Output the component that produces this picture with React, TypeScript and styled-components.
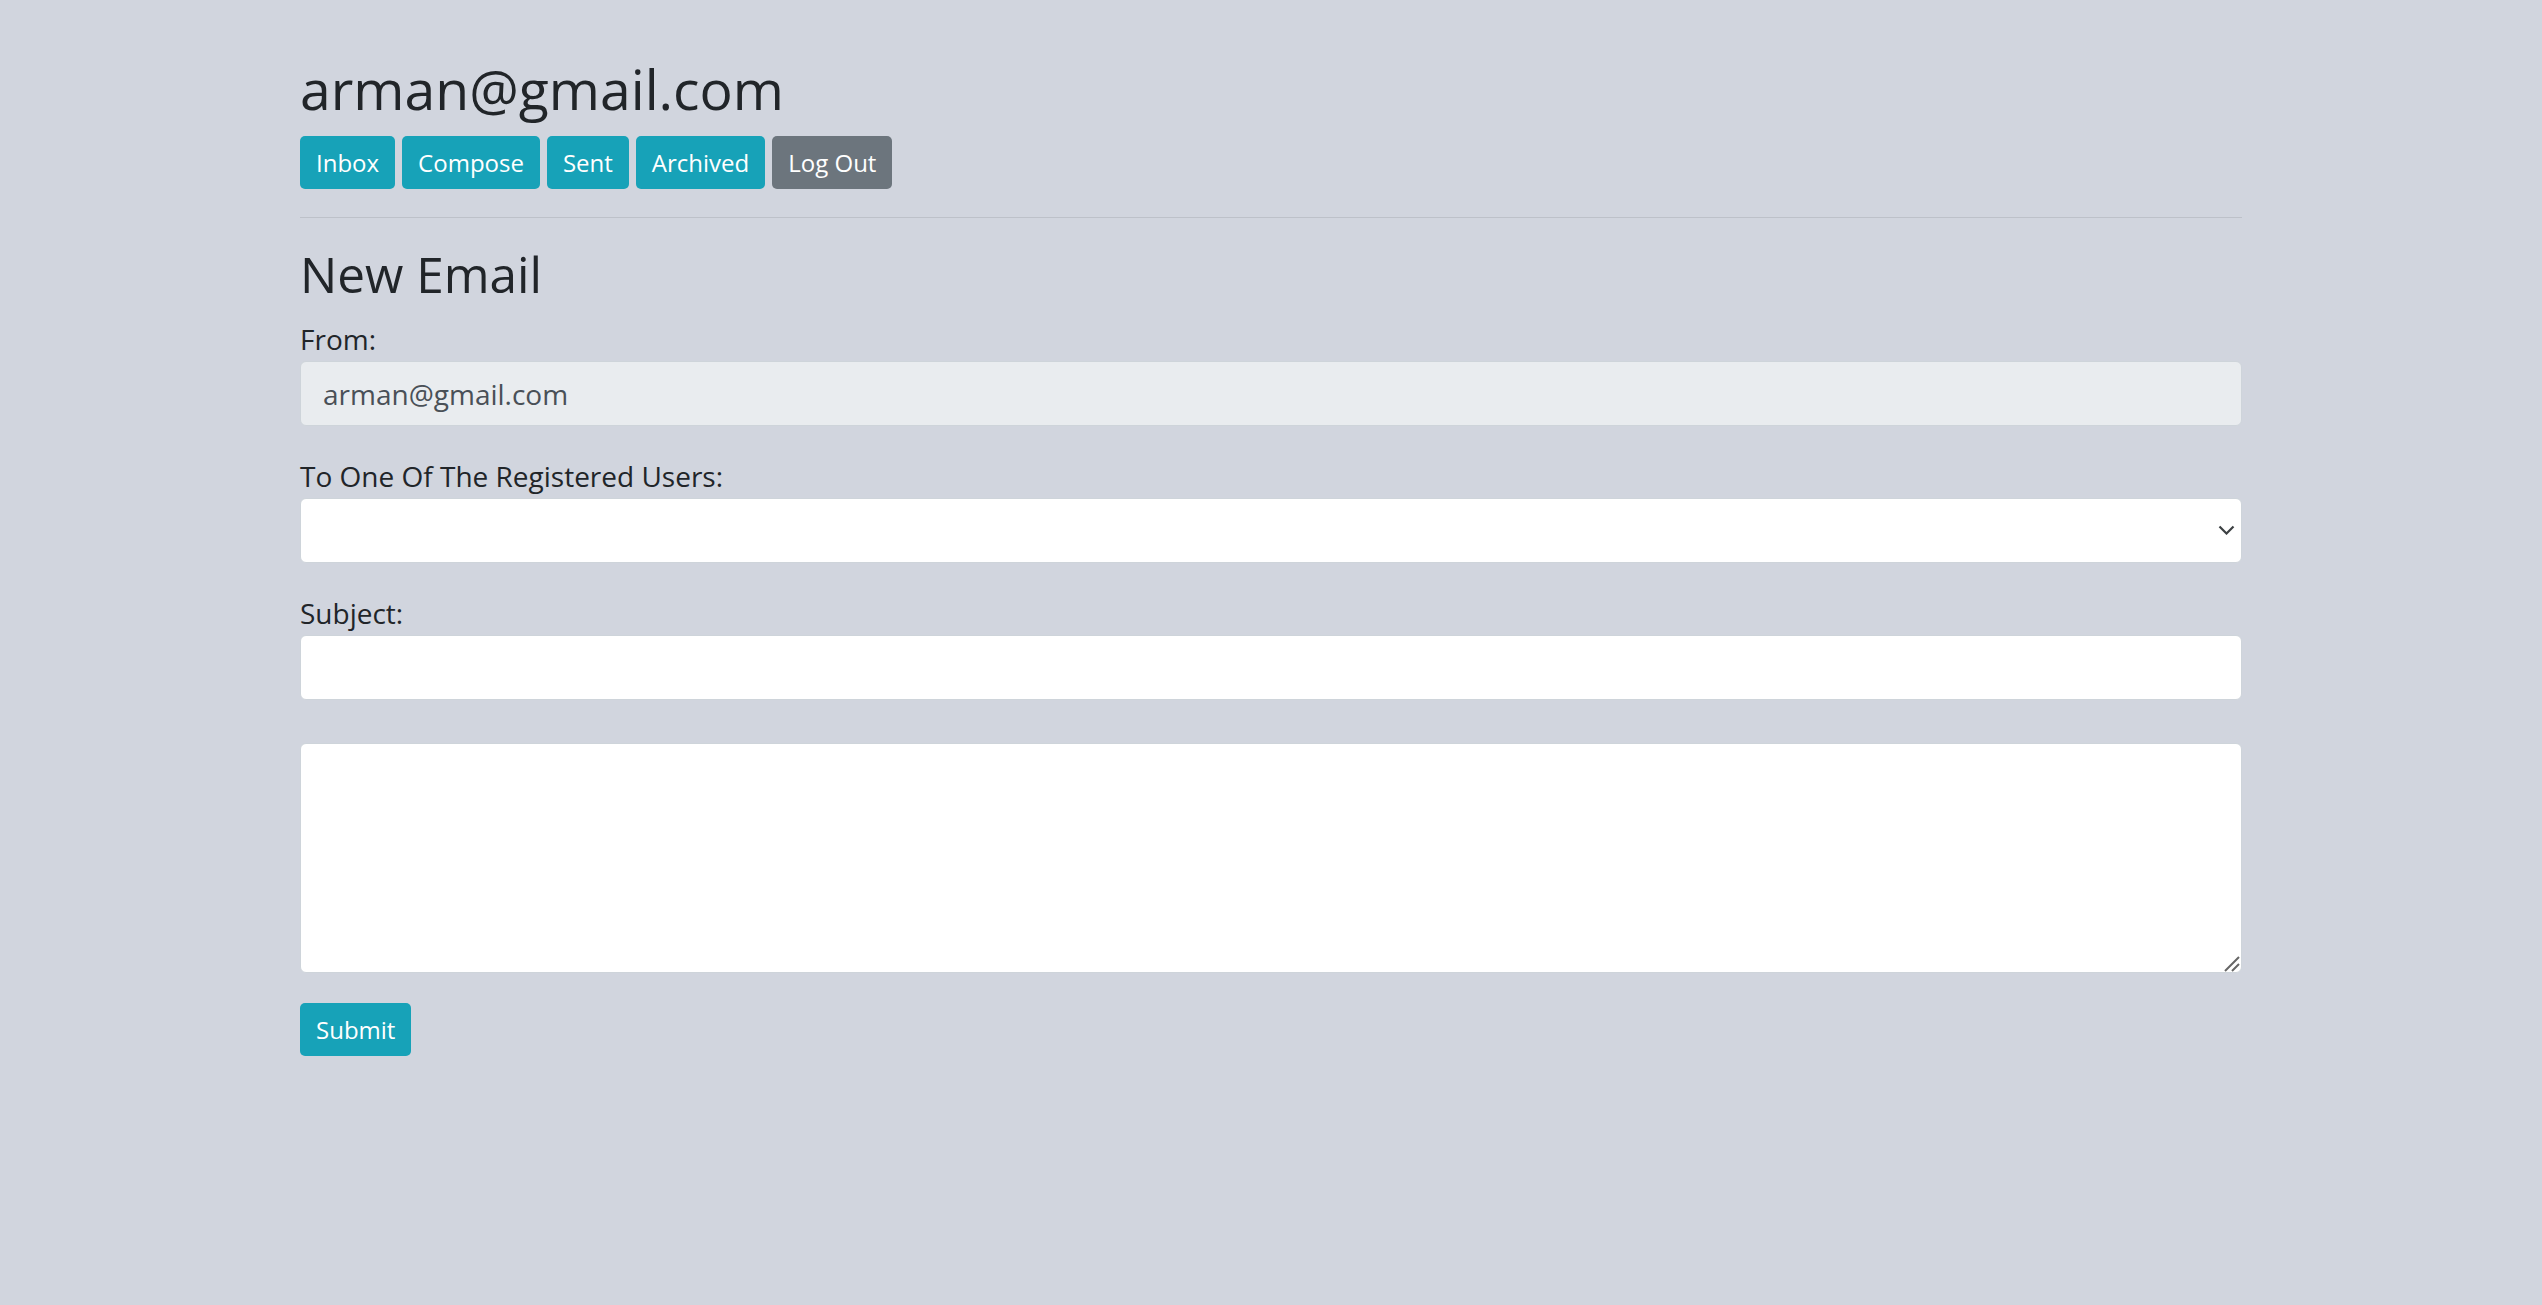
import React from "react";
import styled, { createGlobalStyle } from "styled-components";

const GlobalStyle = createGlobalStyle`
  html, body {
    margin: 0;
    padding: 0;
    background: #d1d5de;
  }
  body {
    font-family: "Open Sans", "Noto Sans", sans-serif;
    color: #212529;
  }
`;

function App() {
  return (
    <>
      <GlobalStyle />
      <Page>
        <Title>arman@gmail.com</Title>
        <Nav>
          <NavButton>Inbox</NavButton>
          <NavButton>Compose</NavButton>
          <NavButton>Sent</NavButton>
          <NavButton>Archived</NavButton>
          <NavButton $secondary>Log Out</NavButton>
        </Nav>
        <Rule />
        <Heading>New Email</Heading>
        <form onSubmit={(e) => e.preventDefault()}>
          <Group>
            <Label>From:</Label>
            <Input disabled value="arman@gmail.com" readOnly />
          </Group>
          <Group>
            <Label>To One Of The Registered Users:</Label>
            <SelectWrap>
              <Select defaultValue="">
                <option value=""></option>
              </Select>
              <Chevron width="17" height="10" viewBox="0 0 17 10">
                <path d="M1.5 1.5 L8.5 8.5 L15.5 1.5" fill="none" stroke="#3c4043" strokeWidth="2.2" />
              </Chevron>
            </SelectWrap>
          </Group>
          <Group>
            <Label>Subject:</Label>
            <Input />
          </Group>
          <Group $spaced>
            <TextWrap>
              <TextArea />
              <Grip width="16" height="16" viewBox="0 0 16 16">
                <path d="M1 15 L15 1 M8 15 L15 8" stroke="#666" strokeWidth="2" />
              </Grip>
            </TextWrap>
          </Group>
          <SubmitButton type="submit">Submit</SubmitButton>
        </form>
      </Page>
    </>
  );
}

const Page = styled.div`
  max-width: 1942px;
  margin: 0 auto;
  padding-top: 56px;
`;

const Title = styled.h1`
  margin: 0 0 14px;
  font-size: 55.3px;
  line-height: 66px;
  font-weight: 400;
`;

const Nav = styled.div`
  display: flex;
  gap: 7px;
`;

const NavButton = styled.button<{ $secondary?: boolean }>`
  height: 53px;
  padding: 0 16px;
  border: none;
  border-radius: 5px;
  background: ${(p) => (p.$secondary ? "#6c757d" : "#17a2b8")};
  color: #fff;
  font-family: inherit;
  font-size: 24px;
  cursor: pointer;
`;

const Rule = styled.hr`
  margin: 28px 0 0;
  border: none;
  border-top: 1px solid #bdc1c9;
`;

const Heading = styled.h3`
  margin: 26px 0 14px;
  font-size: 49.5px;
  line-height: 60px;
  font-weight: 400;
`;

const Group = styled.div<{ $spaced?: boolean }>`
  margin-bottom: 29px;
  margin-top: ${(p) => (p.$spaced ? "43px" : "0")};
`;

const Label = styled.div`
  font-size: 28px;
  line-height: 42px;
  margin-bottom: 1px;
`;

const fieldBase = `
  display: block;
  width: 100%;
  box-sizing: border-box;
  border: 1px solid #ced4da;
  border-radius: 6px;
  background: #fff;
  font-family: inherit;
  font-size: 28px;
  color: #495057;
  outline: none;
`;

const Input = styled.input`
  ${fieldBase}
  height: 65px;
  padding: 0 22px;
  &:disabled {
    background: #e9ecef;
  }
`;

const SelectWrap = styled.div`
  position: relative;
`;

const Select = styled.select`
  ${fieldBase}
  height: 65px;
  padding: 0 22px;
  appearance: none;
`;

const Chevron = styled.svg`
  position: absolute;
  right: 7px;
  top: 27px;
  pointer-events: none;
`;

const TextWrap = styled.div`
  position: relative;
`;

const TextArea = styled.textarea`
  ${fieldBase}
  height: 230px;
  padding: 10px 22px;
  resize: none;
`;

const Grip = styled.svg`
  position: absolute;
  right: 2px;
  bottom: 1px;
  pointer-events: none;
`;

const SubmitButton = styled(NavButton)`
  margin-top: 1px;
`;

export default App;
